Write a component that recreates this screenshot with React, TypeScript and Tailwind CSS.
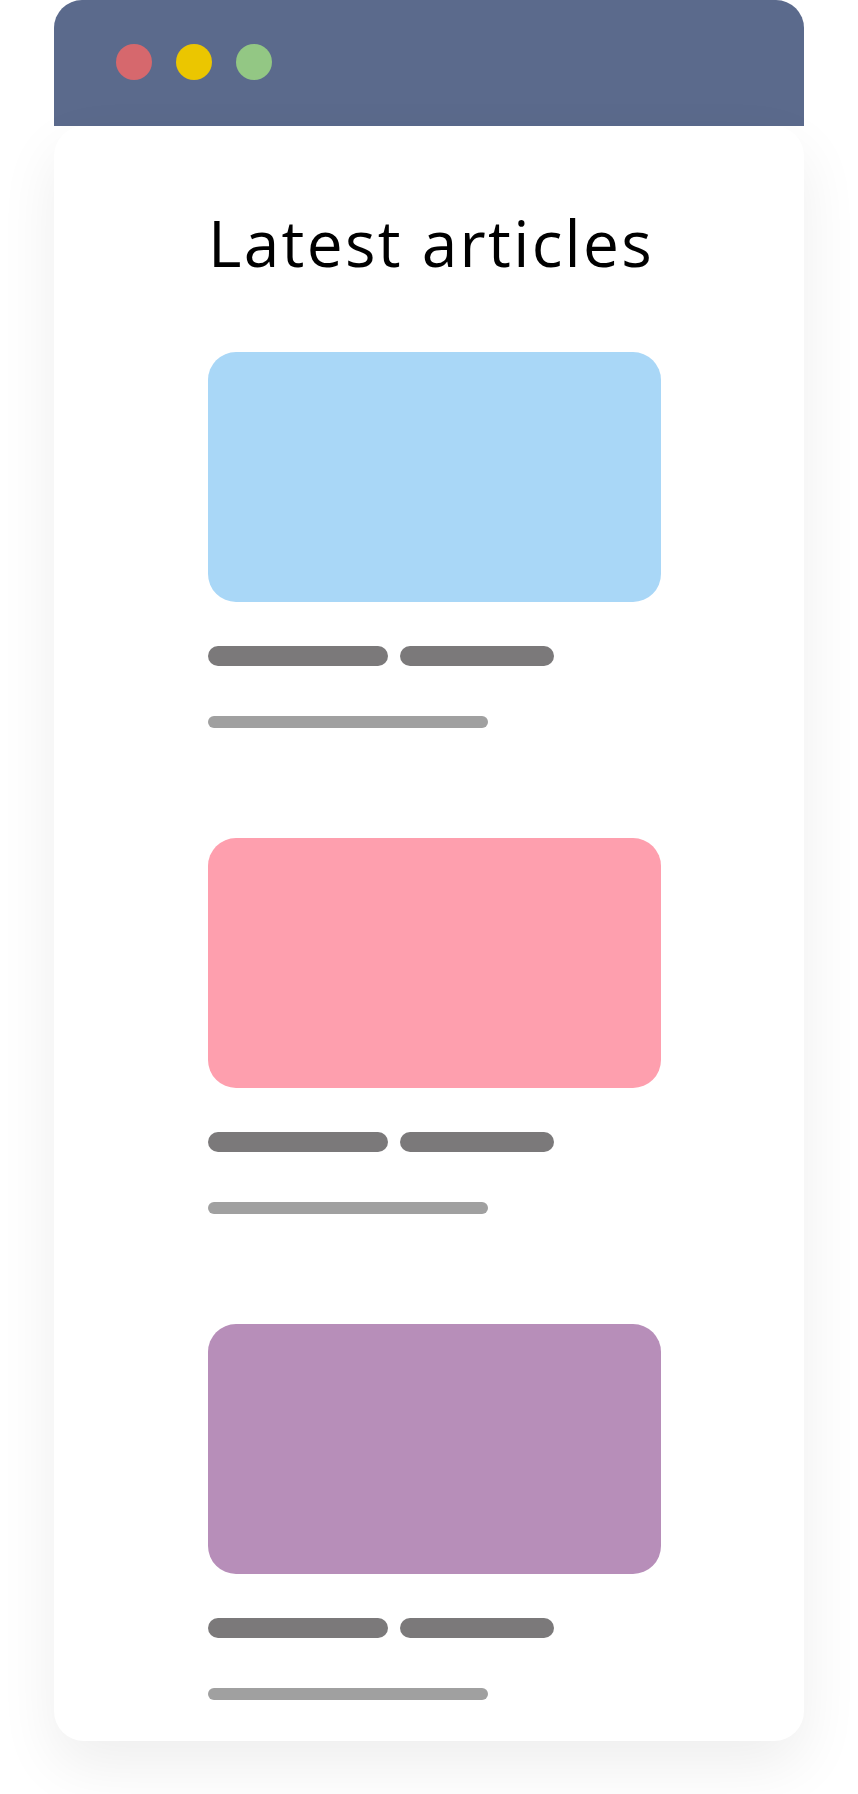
const articles = [
  { color: "bg-[#a9d7f7]" },
  { color: "bg-[#fe9fae]" },
  { color: "bg-[#b78eb9]" },
]

function ArticleCard({ color }: { color: string }) {
  return (
    <div className="flex flex-col">
      {/* Thumbnail */}
      <div className={`h-[250px] w-[453px] rounded-[28px] ${color}`} />
      {/* Title bars */}
      <div className="mt-[44px] flex gap-[12px]">
        <div className="h-[20px] w-[180px] rounded-full bg-[#7b797a]" />
        <div className="h-[20px] w-[154px] rounded-full bg-[#7b797a]" />
      </div>
      {/* Meta bar */}
      <div className="mt-[50px] h-[12px] w-[280px] rounded-full bg-[#a0a0a0]" />
    </div>
  )
}

export default function App() {
  return (
    <div className="min-h-[1794px] w-[858px] bg-white pl-[54px]">
      <div className="w-[750px]">
        {/* Window bar */}
        <div className="flex h-[126px] items-start gap-[24px] rounded-t-[28px] bg-[#5b6a8c] pl-[62px] pt-[44px]">
          <div className="h-[36px] w-[36px] rounded-full bg-[#d6686d]" />
          <div className="h-[36px] w-[36px] rounded-full bg-[#ebc600]" />
          <div className="h-[36px] w-[36px] rounded-full bg-[#93c784]" />
        </div>

        {/* Page */}
        <div className="rounded-[30px] bg-white pb-[41px] pl-[154px] pt-[85px] shadow-[0_24px_60px_rgba(0,0,0,0.07)]">
          <h1 className="whitespace-nowrap font-['Open_Sans',sans-serif] text-[64px] font-normal leading-[64px] tracking-[2.3px] text-black">
            Latest articles
          </h1>

          <div className="mt-[77px] flex flex-col gap-[110px]">
            {articles.map((a, i) => (
              <ArticleCard key={i} color={a.color} />
            ))}
          </div>
        </div>
      </div>
    </div>
  )
}
